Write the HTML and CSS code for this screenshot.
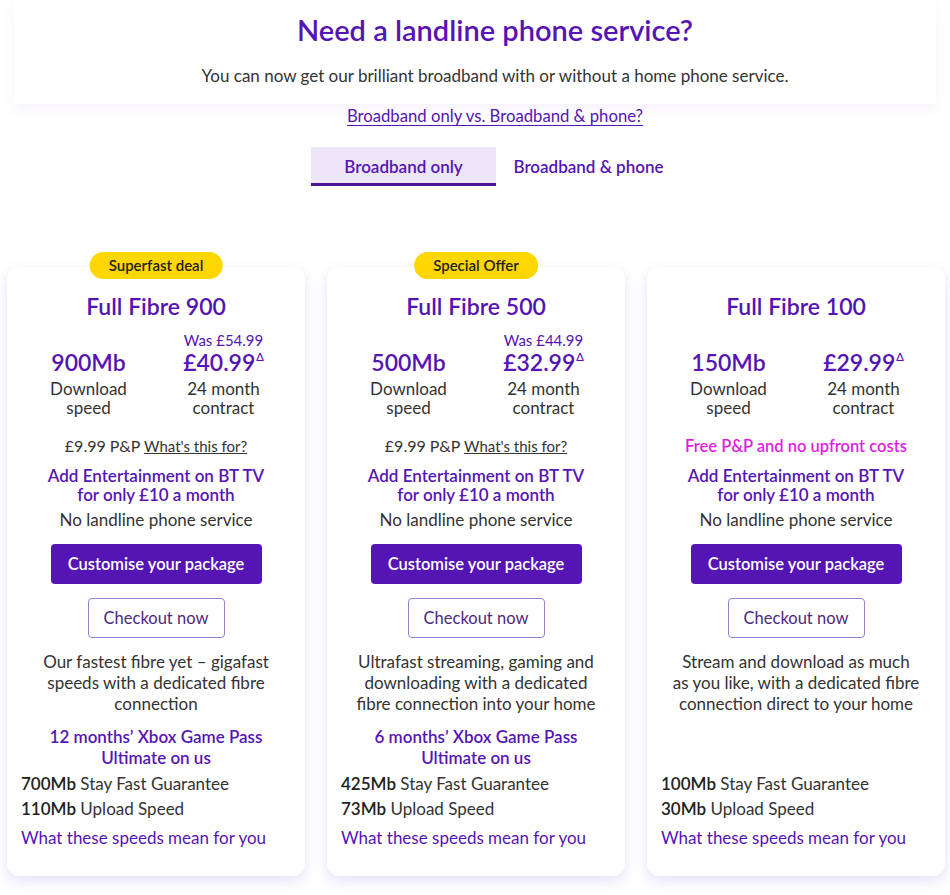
FILE: index.html
```html
<!DOCTYPE html>
<html lang="en">
<head>
<meta charset="utf-8">
<title>BT Broadband</title>
<link rel="stylesheet" href="styles.css">
</head>
<body>
<section class="intro">
  <h1>Need a landline phone service?</h1>
  <p>You can now get our brilliant broadband with or without a home phone service.</p>
</section>
<div class="compare"><a href="#">Broadband only vs. Broadband &amp; phone?</a></div>
<div class="tabs">
  <div class="tab active">Broadband only</div>
  <div class="tab">Broadband &amp; phone</div>
</div>

<div class="cards">
  <article class="card">
    <span class="badge">Superfast deal</span>
    <h2>Full Fibre 900</h2>
    <div class="stats">
      <div class="col"><div class="val">900Mb</div><div class="lbl">Download speed</div></div>
      <div class="col"><div class="was">Was £54.99</div><div class="val">£40.99<sup>Δ</sup></div><div class="lbl">24 month contract</div></div>
    </div>
    <p class="pp">£9.99 P&amp;P <a href="#">What's this for?</a></p>
    <p class="ent">Add Entertainment on BT TV for only £10 a month</p>
    <p class="nol">No landline phone service</p>
    <button class="btn-primary">Customise your package</button>
    <button class="btn-secondary">Checkout now</button>
    <p class="desc">Our fastest fibre yet – gigafast speeds with a dedicated fibre connection</p>
    <p class="xbox">12 months’ Xbox Game Pass Ultimate on us</p>
    <div class="bottom">
      <p class="feat"><b>700Mb</b> Stay Fast Guarantee</p>
      <p class="feat"><b>110Mb</b> Upload Speed</p>
      <a class="speeds" href="#">What these speeds mean for you</a>
    </div>
  </article>

  <article class="card">
    <span class="badge">Special Offer</span>
    <h2>Full Fibre 500</h2>
    <div class="stats">
      <div class="col"><div class="val">500Mb</div><div class="lbl">Download speed</div></div>
      <div class="col"><div class="was">Was £44.99</div><div class="val">£32.99<sup>Δ</sup></div><div class="lbl">24 month contract</div></div>
    </div>
    <p class="pp">£9.99 P&amp;P <a href="#">What's this for?</a></p>
    <p class="ent">Add Entertainment on BT TV for only £10 a month</p>
    <p class="nol">No landline phone service</p>
    <button class="btn-primary">Customise your package</button>
    <button class="btn-secondary">Checkout now</button>
    <p class="desc">Ultrafast streaming, gaming and downloading with a dedicated fibre connection into your home</p>
    <p class="xbox">6 months’ Xbox Game Pass Ultimate on us</p>
    <div class="bottom">
      <p class="feat"><b>425Mb</b> Stay Fast Guarantee</p>
      <p class="feat"><b>73Mb</b> Upload Speed</p>
      <a class="speeds" href="#">What these speeds mean for you</a>
    </div>
  </article>

  <article class="card">
    <h2>Full Fibre 100</h2>
    <div class="stats">
      <div class="col"><div class="val">150Mb</div><div class="lbl">Download speed</div></div>
      <div class="col"><div class="val">£29.99<sup>Δ</sup></div><div class="lbl">24 month contract</div></div>
    </div>
    <p class="pp free">Free P&amp;P and no upfront costs</p>
    <p class="ent">Add Entertainment on BT TV for only £10 a month</p>
    <p class="nol">No landline phone service</p>
    <button class="btn-primary">Customise your package</button>
    <button class="btn-secondary">Checkout now</button>
    <p class="desc">Stream and download as much as&nbsp;you like, with a dedicated fibre connection direct to your home</p>
    <div class="bottom">
      <p class="feat"><b>100Mb</b> Stay Fast Guarantee</p>
      <p class="feat"><b>30Mb</b> Upload Speed</p>
      <a class="speeds" href="#">What these speeds mean for you</a>
    </div>
  </article>
</div>
</body>
</html>
```

FILE: styles.css
```css
* { box-sizing: border-box; }
body {
  margin: 0;
  background: #fff;
  font-family: Lato, "Open Sans", sans-serif;
  color: #333;
}
p { margin: 0; }

.intro {
  margin: 0 14px;
  height: 104px;
  padding: 12px 0 0 40px;
  text-align: center;
  background: #fff;
  box-shadow: 0 6px 14px rgba(85, 20, 180, 0.05);
}
.intro h1 {
  margin: 0;
  font-size: 29px;
  line-height: 36px;
  font-weight: 600;
  color: #5514b4;
}
.intro p {
  margin-top: 18px;
  font-size: 17px;
  line-height: 20px;
  color: #333;
}

.compare {
  text-align: center;
  padding-left: 40px;
  margin-top: 2px;
  font-size: 16.7px;
  line-height: 20px;
}
.compare a { color: #5514b4; text-underline-offset: 3px; }

.tabs {
  display: flex;
  justify-content: center;
  padding-left: 42px;
  margin-top: 21px;
}
.tab {
  width: 185px;
  height: 39px;
  display: flex;
  align-items: center;
  justify-content: center;
  font-size: 17px;
  font-weight: 600;
  color: #5514b4;
  border-bottom: 3px solid transparent;
  padding-top: 2px;
}
.tab.active {
  background: #ede6f8;
  border-bottom-color: #4a1590;
}

.cards {
  display: grid;
  grid-template-columns: repeat(3, 298px);
  gap: 22px;
  padding-left: 7px;
  margin-top: 81px;
  padding-bottom: 20px;
}
.card {
  position: relative;
  display: flex;
  flex-direction: column;
  align-items: center;
  text-align: center;
  background: #fff;
  border-radius: 12px;
  padding: 25px 14px 26px;
  box-shadow: 0 5px 14px rgba(100, 60, 200, 0.16);
}
.badge {
  position: absolute;
  top: -15px;
  left: 50%;
  transform: translateX(-50%);
  background: #fed600;
  border-radius: 14px;
  height: 27px;
  line-height: 27px;
  padding: 0 19px;
  font-size: 15px;
  font-weight: 600;
  color: #222;
  white-space: nowrap;
}
.card h2 {
  margin: 0;
  font-size: 23px;
  line-height: 28px;
  font-weight: 600;
  color: #5514b4;
}
.stats {
  display: grid;
  grid-template-columns: 110px 110px;
  column-gap: 25px;
  align-items: end;
  height: 85px;
  margin-top: 12px;
}
.col .was {
  font-size: 15px;
  line-height: 17px;
  color: #5514b4;
}
.col .val {
  font-size: 23px;
  line-height: 26px;
  font-weight: 600;
  color: #5514b4;
  margin-bottom: 4px;
}
.col .val sup {
  font-size: 11px;
  vertical-align: 10px;
  line-height: 0;
  margin-left: 1px;
}
.col .lbl {
  font-size: 17px;
  line-height: 19px;
  color: #333;
}
.pp {
  margin-top: 19px;
  font-size: 16px;
  line-height: 20px;
}
.pp a { color: #333; font-size: 15px; }
.pp.free { color: #df1fdf; font-weight: 600; font-size: 16.5px; }
.ent {
  margin-top: 10px;
  font-size: 17px;
  line-height: 19px;
  font-weight: 600;
  color: #5514b4;
  padding: 0 20px;
}
.nol {
  margin-top: 6px;
  font-size: 17px;
  line-height: 19px;
}
.btn-primary {
  margin-top: 15px;
  width: 211px;
  height: 40px;
  border: 0;
  border-radius: 4px;
  background: #5514b4;
  color: #fff;
  font-family: inherit;
  font-size: 16.5px;
  font-weight: 600;
}
.btn-secondary {
  margin-top: 14px;
  width: 137px;
  height: 40px;
  border: 1px solid #9a7fcf;
  border-radius: 4px;
  background: #fff;
  color: #4a2a80;
  font-family: inherit;
  font-size: 16.5px;
}
.desc {
  margin-top: 13px;
  font-size: 17px;
  line-height: 21px;
  max-width: 250px;
}
.xbox {
  margin-top: 12px;
  font-size: 17px;
  line-height: 21px;
  font-weight: 600;
  color: #5514b4;
  padding: 0 20px;
}
.bottom {
  margin-top: auto;
  padding-top: 3px;
  align-self: stretch;
  text-align: left;
}
.feat {
  font-size: 17px;
  line-height: 25px;
}
.feat b { color: #222; font-weight: 600; }
.speeds {
  display: block;
  margin-top: 4px;
  font-size: 17px;
  line-height: 25px;
  color: #5514b4;
  text-decoration: none;
}
```
